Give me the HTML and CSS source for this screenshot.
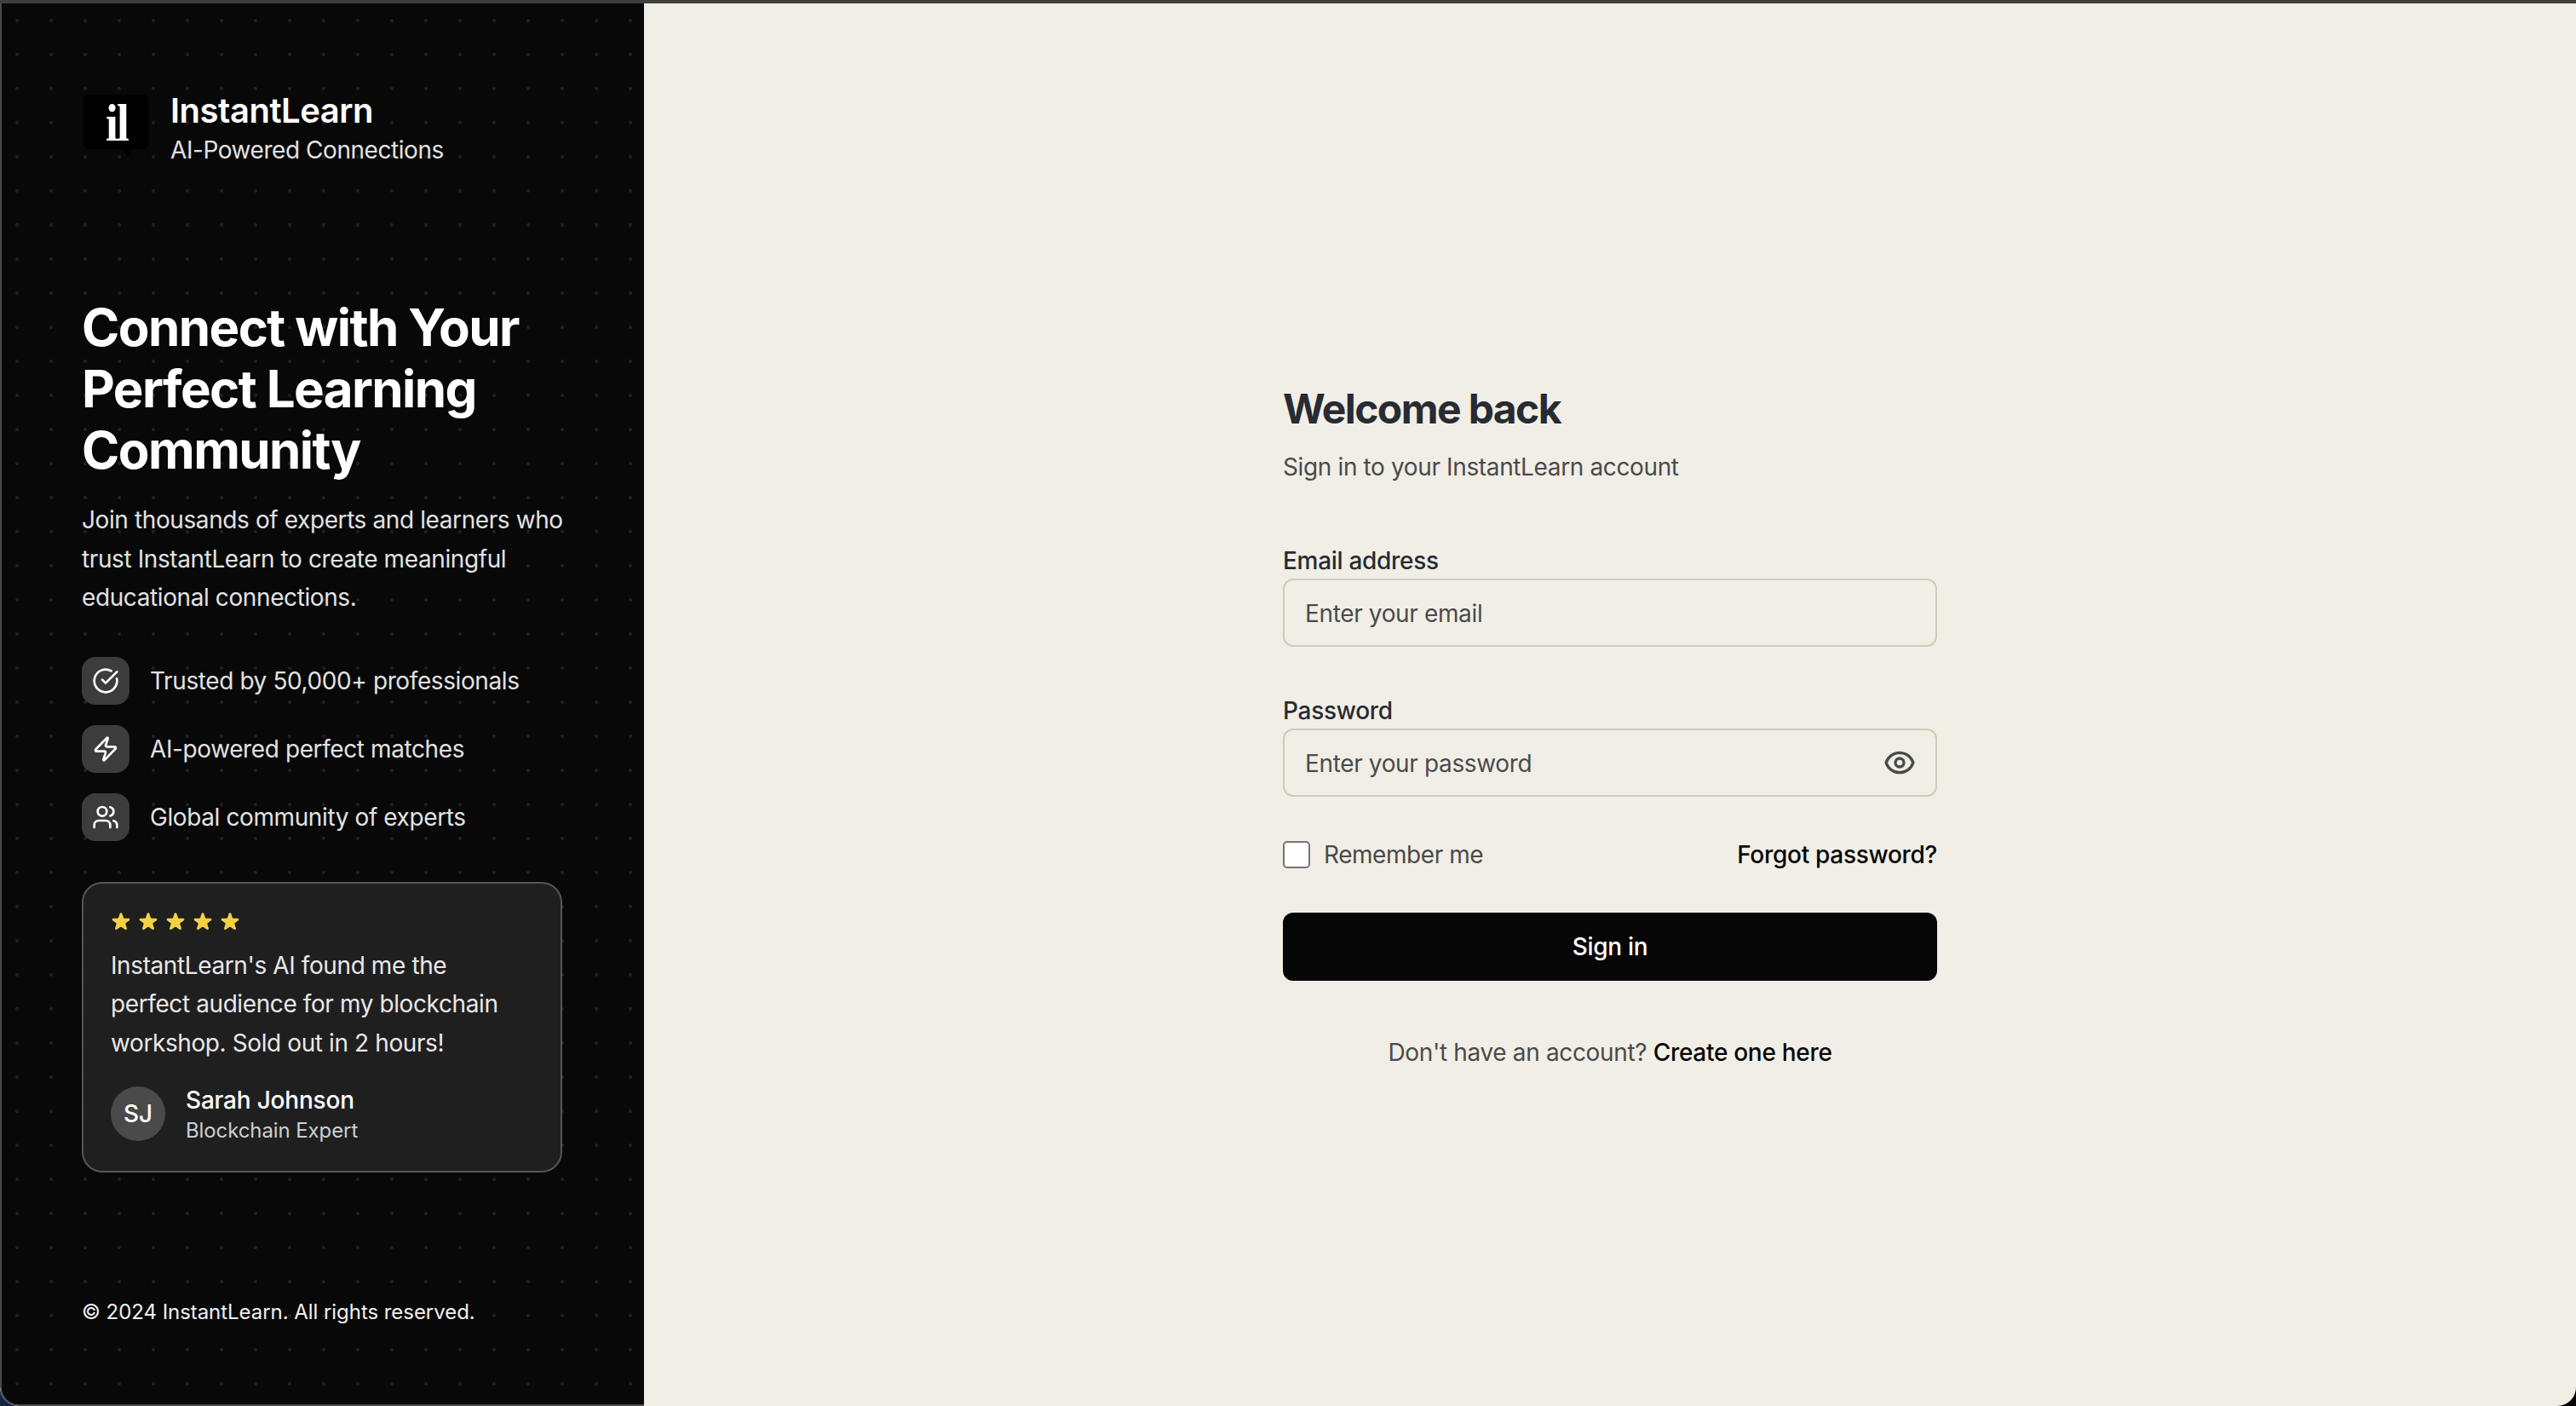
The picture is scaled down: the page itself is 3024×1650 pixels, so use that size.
FILE: index.html
```html
<!DOCTYPE html>
<html lang="en">
<head>
<meta charset="utf-8">
<title>InstantLearn - Sign in</title>
<link rel="stylesheet" href="styles.css">
</head>
<body>
<div class="window">
  <aside class="brand-panel">
    <div class="brand-main">
      <header class="logo-row">
        <div class="logo-mark">
          <svg class="logo-bubble" viewBox="0 0 76 74" aria-hidden="true">
            <path d="M6 0H70a6 6 0 0 1 6 6V58a6 6 0 0 1-6 6H55V74L45 64H6a6 6 0 0 1-6-6V6a6 6 0 0 1 6-6Z"/>
          </svg>
          <span class="logo-letters">il</span>
        </div>
        <div class="logo-text">
          <div class="logo-name">InstantLearn</div>
          <div class="logo-tag">AI-Powered Connections</div>
        </div>
      </header>
      <h1 class="headline">Connect with Your<br>Perfect Learning<br>Community</h1>
      <p class="lead">Join thousands of experts and learners who<br>trust InstantLearn to create meaningful<br>educational connections.</p>
      <ul class="features">
        <li class="feature">
          <span class="feature-icon"><svg class="lucide" viewBox="0 0 24 24"><path d="M21.801 10A10 10 0 1 1 17 3.335"/><path d="m9 11 3 3L22 4"/></svg></span>
          Trusted by 50,000+ professionals
        </li>
        <li class="feature">
          <span class="feature-icon"><svg class="lucide" viewBox="0 0 24 24"><path d="M4 14a1 1 0 0 1-.78-1.63l9.9-10.2a.5.5 0 0 1 .86.46l-1.92 6.02A1 1 0 0 0 13 10h7a1 1 0 0 1 .78 1.63l-9.9 10.2a.5.5 0 0 1-.86-.46l1.92-6.02A1 1 0 0 0 11 14z"/></svg></span>
          AI-powered perfect matches
        </li>
        <li class="feature">
          <span class="feature-icon"><svg class="lucide" viewBox="0 0 24 24"><path d="M16 21v-2a4 4 0 0 0-4-4H6a4 4 0 0 0-4 4v2"/><circle cx="9" cy="7" r="4"/><path d="M16 3.128a4 4 0 0 1 0 7.744"/><path d="M22 21v-2a4 4 0 0 0-3-3.87"/></svg></span>
          Global community of experts
        </li>
      </ul>
      <section class="quote-card">
        <div class="stars">
          <svg class="star" viewBox="0 0 20 20"><path d="M9.049 2.927c.3-.921 1.603-.921 1.902 0l1.07 3.292a1 1 0 00.95.69h3.462c.969 0 1.371 1.24.588 1.81l-2.8 2.034a1 1 0 00-.364 1.118l1.07 3.292c.3.921-.755 1.688-1.54 1.118l-2.8-2.034a1 1 0 00-1.175 0l-2.8 2.034c-.784.57-1.838-.197-1.539-1.118l1.07-3.292a1 1 0 00-.364-1.118L2.98 8.72c-.783-.57-.38-1.81.588-1.81h3.461a1 1 0 00.951-.69l1.07-3.292z"/></svg>
          <svg class="star" viewBox="0 0 20 20"><path d="M9.049 2.927c.3-.921 1.603-.921 1.902 0l1.07 3.292a1 1 0 00.95.69h3.462c.969 0 1.371 1.24.588 1.81l-2.8 2.034a1 1 0 00-.364 1.118l1.07 3.292c.3.921-.755 1.688-1.54 1.118l-2.8-2.034a1 1 0 00-1.175 0l-2.8 2.034c-.784.57-1.838-.197-1.539-1.118l1.07-3.292a1 1 0 00-.364-1.118L2.98 8.72c-.783-.57-.38-1.81.588-1.81h3.461a1 1 0 00.951-.69l1.07-3.292z"/></svg>
          <svg class="star" viewBox="0 0 20 20"><path d="M9.049 2.927c.3-.921 1.603-.921 1.902 0l1.07 3.292a1 1 0 00.95.69h3.462c.969 0 1.371 1.24.588 1.81l-2.8 2.034a1 1 0 00-.364 1.118l1.07 3.292c.3.921-.755 1.688-1.54 1.118l-2.8-2.034a1 1 0 00-1.175 0l-2.8 2.034c-.784.57-1.838-.197-1.539-1.118l1.07-3.292a1 1 0 00-.364-1.118L2.98 8.72c-.783-.57-.38-1.81.588-1.81h3.461a1 1 0 00.951-.69l1.07-3.292z"/></svg>
          <svg class="star" viewBox="0 0 20 20"><path d="M9.049 2.927c.3-.921 1.603-.921 1.902 0l1.07 3.292a1 1 0 00.95.69h3.462c.969 0 1.371 1.24.588 1.81l-2.8 2.034a1 1 0 00-.364 1.118l1.07 3.292c.3.921-.755 1.688-1.54 1.118l-2.8-2.034a1 1 0 00-1.175 0l-2.8 2.034c-.784.57-1.838-.197-1.539-1.118l1.07-3.292a1 1 0 00-.364-1.118L2.98 8.72c-.783-.57-.38-1.81.588-1.81h3.461a1 1 0 00.951-.69l1.07-3.292z"/></svg>
          <svg class="star" viewBox="0 0 20 20"><path d="M9.049 2.927c.3-.921 1.603-.921 1.902 0l1.07 3.292a1 1 0 00.95.69h3.462c.969 0 1.371 1.24.588 1.81l-2.8 2.034a1 1 0 00-.364 1.118l1.07 3.292c.3.921-.755 1.688-1.54 1.118l-2.8-2.034a1 1 0 00-1.175 0l-2.8 2.034c-.784.57-1.838-.197-1.539-1.118l1.07-3.292a1 1 0 00-.364-1.118L2.98 8.72c-.783-.57-.38-1.81.588-1.81h3.461a1 1 0 00.951-.69l1.07-3.292z"/></svg>
        </div>
        <p class="quote">InstantLearn's AI found me the<br>perfect audience for my blockchain<br>workshop. Sold out in 2 hours!</p>
        <div class="author">
          <span class="avatar">SJ</span>
          <div>
            <div class="author-name">Sarah Johnson</div>
            <div class="author-role">Blockchain Expert</div>
          </div>
        </div>
      </section>
    </div>
    <footer class="copyright">© 2024 InstantLearn. All rights reserved.</footer>
  </aside>
  <main class="form-panel">
    <form class="login">
      <h2 class="title">Welcome back</h2>
      <p class="subtitle">Sign in to your InstantLearn account</p>
      <div class="field first-field">
        <label class="label" for="email">Email address</label>
        <input class="input" id="email" type="email" placeholder="Enter your email">
      </div>
      <div class="field">
        <label class="label" for="password">Password</label>
        <div class="input-wrap">
          <input class="input" id="password" type="password" placeholder="Enter your password">
          <svg class="eye" viewBox="0 0 24 24"><path d="M15 12a3 3 0 11-6 0 3 3 0 016 0z"/><path d="M2.458 12C3.732 7.943 7.523 5 12 5c4.478 0 8.268 2.943 9.542 7-1.274 4.057-5.064 7-9.542 7-4.477 0-8.268-2.943-9.542-7z"/></svg>
        </div>
      </div>
      <div class="options">
        <label class="remember"><input class="checkbox" type="checkbox">Remember me</label>
        <a class="link" href="#">Forgot password?</a>
      </div>
      <button class="submit" type="button">Sign in</button>
      <p class="signup">Don't have an account? <a class="link" href="#">Create one here</a></p>
    </form>
  </main>
</div>
</body>
</html>
```
FILE: styles.css
```css
* { box-sizing: border-box; }
html, body { margin: 0; height: 100%; }
body {
  font-family: Inter, "Noto Sans", sans-serif;
  background: linear-gradient(to right, #12263f 0 50%, #000 50% 100%);
  overflow: hidden;
}
.window {
  height: 1650px;
  display: flex;
  border-top: 4px solid #3f3f3f;
  border-radius: 0 0 22px 22px;
  overflow: hidden;
  background: #f1eee6;
}
.brand-panel {
  width: 756px;
  flex: none;
  display: flex;
  flex-direction: column;
  justify-content: space-between;
  padding: 96px 90px 0 94px;
  color: #fff;
  background-color: #080808;
  background-image: radial-gradient(circle at 20px 20px, #1f1f1f 1.6px, transparent 2.4px);
  background-size: 40px 40px;
  background-origin: border-box;
  border-left: 2px solid #4a4a4a;
  border-bottom: 2px solid #4a4a4a;
  border-bottom-left-radius: 22px;
}
.logo-row { display: flex; gap: 26px; align-items: flex-start; }
.logo-mark { position: relative; width: 76px; height: 74px; flex: none; margin: 11px 0 0 2px; }
.logo-bubble { display: block; width: 76px; height: 74px; fill: #000; }
.logo-letters { position: absolute; left: 26px; top: -2px; width: 40px; font-family: "Liberation Serif", serif; font-weight: 700; font-size: 62px; line-height: 70px; letter-spacing: -2px; color: #fff; transform: scaleX(.86); transform-origin: left center; }
.logo-name { font-size: 40px; line-height: 60px; font-weight: 600; letter-spacing: -.48px; }
.logo-tag { font-size: 28px; line-height: 32px; color: #e2e2e2; letter-spacing: -.44px; }
.headline { margin: 156px 0 0; font-size: 60px; line-height: 72px; font-weight: 700; letter-spacing: -1.6px; }
.lead { margin: 24px 0 0; font-size: 28px; line-height: 45.5px; color: #e2e2e2; letter-spacing: -.4px; white-space: nowrap; }
.features { list-style: none; margin: 46px 0 0; padding: 0; display: flex; flex-direction: column; gap: 24px; }
.feature { display: flex; align-items: center; gap: 24px; font-size: 28px; line-height: 56px; color: #e2e2e2; letter-spacing: -.4px; }
.feature-icon { width: 56px; height: 56px; border-radius: 16px; background: #3c3c3c; display: flex; align-items: center; justify-content: center; }
.lucide { width: 32px; height: 32px; fill: none; stroke: #fff; stroke-width: 2; stroke-linecap: round; stroke-linejoin: round; }
.quote-card { width: 564px; margin-top: 48px; padding: 32px 32px 31px; border: 2px solid #565656; border-radius: 24px; background: rgba(33,32,33,.97); }
.stars { display: flex; gap: 4px; margin-left: -2px; height: 26px; align-items: center; }
.star { width: 28px; height: 28px; flex: none; fill: #f5d142; }
.quote { margin: 16px 0 0; font-size: 28px; line-height: 45.5px; color: #e8e8e8; letter-spacing: -.4px; white-space: nowrap; }
.author { display: flex; gap: 24px; align-items: center; margin-top: 26px; }
.avatar { width: 64px; height: 64px; margin-bottom: 3px; border-radius: 50%; background: #4a4a4a; display: flex; align-items: center; justify-content: center; font-size: 28px; font-weight: 500; }
.author-name { font-size: 28px; line-height: 36px; font-weight: 500; letter-spacing: -.2px; }
.author-role { font-size: 24px; line-height: 32px; margin-top: 2px; color: #cfcfcf; letter-spacing: -.1px; }
.copyright { font-size: 24px; line-height: 32px; color: #f0f0f0; margin-bottom: 92px; letter-spacing: -.05px; }
.form-panel { flex: 1; display: flex; align-items: center; justify-content: center; padding-top: 48px; }
.login { width: 768px; color: #282b33; }
.title { margin: 0; font-size: 48px; line-height: 64px; font-weight: 700; letter-spacing: -1.6px; }
.subtitle { margin: 16px 0 0; font-size: 28px; line-height: 40px; color: #4a4a4a; letter-spacing: -.37px; }
.field { margin-top: 56px; display: flex; flex-direction: column; }
.first-field { margin-top: 71px; }
.label { font-size: 28px; line-height: 38px; margin-bottom: 2px; font-weight: 500; letter-spacing: -.3px; }
.input { width: 100%; height: 80px; padding: 2px 24px 0; border: 2px solid #cfccb9; border-radius: 12px; background: #f1eee6; font: 400 28px Inter, sans-serif; letter-spacing: -.36px; color: #282b33; outline: none; display: block; }
.input::placeholder { color: #4b4b4b; opacity: 1; }
.input-wrap { position: relative; }
.eye { position: absolute; right: 24px; top: 20px; width: 40px; height: 40px; fill: none; stroke: #4a4a4a; stroke-width: 2; stroke-linecap: round; stroke-linejoin: round; }
.options { margin-top: 40px; display: flex; justify-content: space-between; align-items: center; height: 56px; }
.remember { display: flex; align-items: center; gap: 16px; font-size: 28px; color: #4a4a4a; letter-spacing: -.45px; }
.checkbox { appearance: none; width: 32px; height: 32px; margin: 0; background: #fff; border: 2px solid #767676; border-radius: 5px; }
.link { color: #060606; font-weight: 500; text-decoration: none; font-size: 28px; letter-spacing: -.3px; }
.submit { display: block; width: 100%; height: 80px; margin-top: 40px; border: 0; border-radius: 12px; background: #060606; color: #fff; font: 500 28px Inter, sans-serif; letter-spacing: -.3px; }
.signup { margin: 64px 0 0; text-align: center; font-size: 28px; line-height: 40px; color: #4a4a4a; letter-spacing: -.35px; }
```
